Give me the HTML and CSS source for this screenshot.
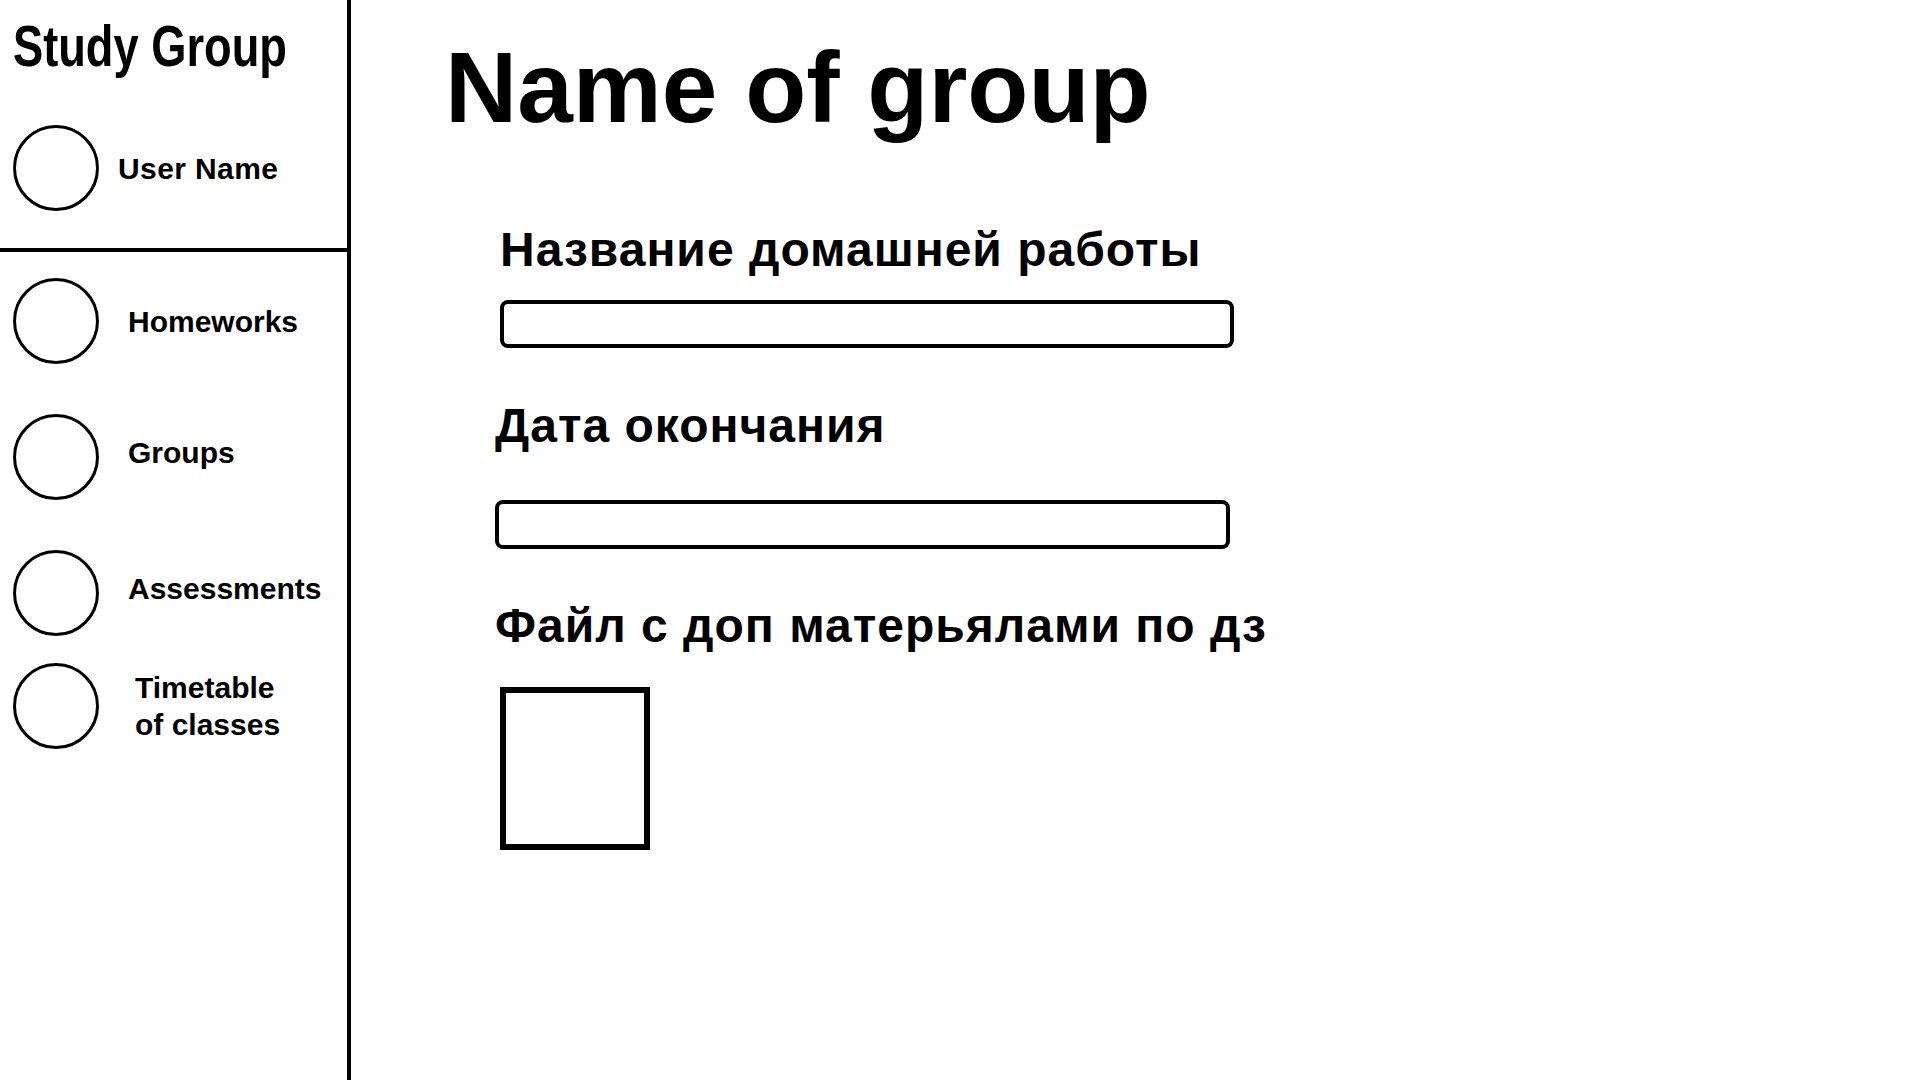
FILE: index.html
```html
<!DOCTYPE html>
<html lang="ru">
<head>
<meta charset="utf-8">
<title>Study Group</title>
<link rel="stylesheet" href="styles.css">
</head>
<body>
<div class="app">
  <aside class="sidebar">
    <div class="sidebar-head">
      <div class="brand">Study Group</div>
      <div class="row row-user">
        <div class="avatar"></div>
        <div class="row-label">User Name</div>
      </div>
    </div>
    <nav class="nav">
      <div class="row row-nav">
        <div class="avatar"></div>
        <div class="row-label">Homeworks</div>
      </div>
      <div class="row row-nav">
        <div class="avatar"></div>
        <div class="row-label row-label-up">Groups</div>
      </div>
      <div class="row row-nav">
        <div class="avatar"></div>
        <div class="row-label row-label-up">Assessments</div>
      </div>
      <div class="row row-nav row-last">
        <div class="avatar"></div>
        <div class="row-label row-label-wide">Timetable<br>of classes</div>
      </div>
    </nav>
  </aside>
  <main class="content">
    <h1 class="page-title">Name of group</h1>
    <div class="form">
      <div class="field field-name">
        <div class="field-label">Название домашней работы</div>
        <div class="input input-name"></div>
      </div>
      <div class="field field-date">
        <div class="field-label">Дата окончания</div>
        <div class="input input-date"></div>
      </div>
      <div class="field field-file">
        <div class="field-label">Файл с доп матерьялами по дз</div>
        <div class="file-box"></div>
      </div>
    </div>
  </main>
</div>
</body>
</html>
```
FILE: styles.css
```css
* { box-sizing: border-box; }
html, body {
  margin: 0;
  padding: 0;
  background: #fff;
  color: #000;
  font-family: "Liberation Sans", Arial, sans-serif;
}
.app {
  display: flex;
  width: 1920px;
  height: 1080px;
}
.sidebar {
  width: 351px;
  flex: none;
  border-right: 4px solid #000;
  display: flex;
  flex-direction: column;
}
.sidebar-head {
  border-bottom: 4px solid #000;
  height: 252px;
  padding-top: 17px;
}
.brand {
  font-family: "Liberation Sans Narrow", "Liberation Sans", sans-serif;
  font-weight: 700;
  font-size: 58px;
  line-height: 1;
  margin-left: 13px;
  white-space: nowrap;
  transform: scaleX(0.78);
  transform-origin: left center;
}
.row {
  display: flex;
  align-items: center;
  padding-left: 13px;
}
.row-user {
  margin-top: 50px;
}
.avatar {
  width: 86px;
  height: 86px;
  border: 3.5px solid #000;
  border-radius: 50%;
  flex: none;
}
.row-label {
  font-weight: 700;
  font-size: 30px;
  line-height: 37px;
  margin-left: 29px;
  white-space: nowrap;
}
.row-user .row-label {
  margin-left: 19px;
  letter-spacing: 0.4px;
}
.row-label-up {
  margin-bottom: 9px;
}
.row-label-wide {
  margin-left: 36px;
}
.nav {
  display: flex;
  flex-direction: column;
  gap: 50px;
  padding-top: 26px;
}
.row-nav.row-last {
  margin-top: -23px;
}
.content {
  flex: 1;
  padding-left: 94px;
}
.page-title {
  margin: 37px 0 0 0;
  font-size: 100px;
  line-height: 1;
  font-weight: 700;
}
.form {
  padding-left: 50px;
}
.field-label {
  font-weight: 700;
  font-size: 48px;
  letter-spacing: 1px;
  line-height: 1;
  white-space: nowrap;
}
.field-name {
  margin-top: 89px;
  padding-left: 5px;
}
.field-date {
  margin-top: 54px;
}
.field-file {
  margin-top: 53px;
}
.input {
  border: 4px solid #000;
  border-radius: 8px;
}
.input-name {
  margin-top: 26px;
  width: 734px;
  height: 48px;
}
.input-date {
  margin-top: 50px;
  width: 735px;
  height: 49px;
}
.file-box {
  margin-top: 37px;
  margin-left: 5px;
  width: 150px;
  height: 163px;
  border: 6px solid #000;
}
```
